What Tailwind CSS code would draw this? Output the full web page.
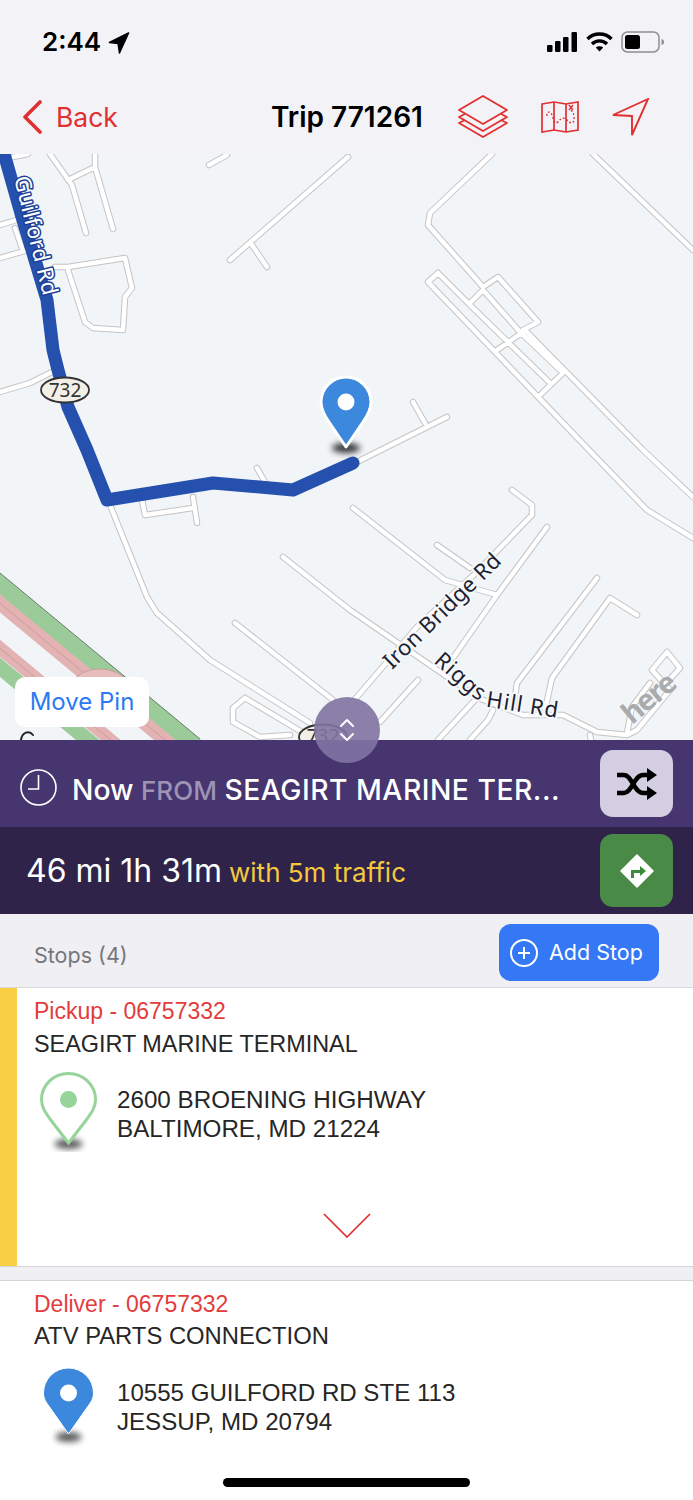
<!DOCTYPE html>
<html>
<head>
<meta charset="utf-8">
<script src="https://cdn.jsdelivr.net/npm/@tailwindcss/browser@4"></script>
</head>
<body class="m-0">
<div class="relative w-[693px] h-[1500px] overflow-hidden bg-[#f2f2f7] font-['Inter',sans-serif] flex flex-col">
  <!-- status bar -->
  <div class="h-[77px] shrink-0 flex items-start justify-between pl-[42px] pr-[28px] pt-[25px]">
    <div class="flex items-center gap-[7px] text-black">
      <span class="text-[26px] leading-[34px] font-semibold">2:44</span>
      <svg width="22" height="23" viewBox="0 0 22 24"><path d="M21 2 L1 12 L10 13 L11.500 23 Z" fill="#000" stroke="#000" stroke-width="1.500" stroke-linejoin="round"/></svg>
    </div>
    <div class="flex items-center gap-[8px] h-[34px]">
      <svg width="31" height="20" viewBox="0 0 31 20"><rect x="0" y="13" width="5.500" height="7" rx="1.200"/><rect x="8" y="9" width="5.500" height="11" rx="1.200"/><rect x="16" y="5" width="5.500" height="15" rx="1.200"/><rect x="24.500" y="0" width="5.500" height="20" rx="1.200"/></svg>
      <svg width="27" height="20" viewBox="0 0 27 20" fill="none" stroke="#000" stroke-width="3.400"><path d="M1.500 7 A17 17 0 0 1 25.500 7"/><path d="M6 12 A10.500 10.500 0 0 1 21 12"/><path d="M13.500 19.500 L9.800 15.600 A5.400 5.400 0 0 1 17.200 15.600 Z" fill="#000" stroke="none"/></svg>
      <svg width="44" height="22" viewBox="0 0 44 22" fill="none"><rect x="1" y="1" width="37" height="20" rx="5.500" stroke="#8e8e93" stroke-width="1.500"/><rect x="4" y="4" width="15" height="14" rx="2.500" fill="#000"/><path d="M40.500 8 C42.500 8.500 43 9.500 43 11 C43 12.500 42.500 13.500 40.500 14 Z" fill="#8e8e93"/></svg>
    </div>
  </div>
  <!-- nav bar -->
  <div class="h-[77px] shrink-0 relative flex items-center pl-[22px] pr-[43px] pt-[2px]">
    <div class="flex items-center gap-[14px] text-[#e13030]">
      <svg width="20" height="34" viewBox="0 0 20 34" fill="none" stroke="#e13030" stroke-width="3.600" stroke-linecap="round" stroke-linejoin="round"><path d="M18 2 L3 17 L18 32"/></svg>
      <span class="text-[26.500px] leading-[34px]">Back</span>
    </div>
    <div class="ml-[153px] text-[28px] leading-[34px] font-semibold text-black">Trip 771261</div>
    <div class="ml-auto flex items-center gap-[33px]">
      <svg width="50" height="44" viewBox="0 0 50 44" fill="none" stroke="#e13030" stroke-width="1.800" stroke-linejoin="round"><path d="M25 1 L49 15 L25 29 L1 15 Z"/><path d="M7 19 L1 22 L25 36 L49 22 L43 19"/><path d="M7 25 L1 28 L25 42 L49 28 L43 25"/></svg>
      <svg width="38" height="32" viewBox="0 0 38 32" fill="none" stroke="#e13030" stroke-width="1.700"><path d="M1 3 L13 1 L25 3 L37 1 L37 29 L25 31 L13 29 L1 31 Z"/><path d="M13 1 V29 M25 3 V31"/><path d="M6 15 C5 10 10 10 11 14 C13 20 13 23 17 21 C20 17 23 16 26 19 C30 24 34 22 33 16 C33 12 31 10 29 8" stroke-width="1.400" stroke-dasharray="1.800 2"/><path d="M28 4 L32 9 M32 4 L28 9" stroke-width="1.400"/></svg>
      <svg width="38" height="38" viewBox="0 0 38 38" fill="none" stroke="#e13030" stroke-width="1.900" stroke-linejoin="miter"><path d="M36 1 L1 17 L20 18 L20 37 Z"/></svg>
    </div>
  </div>
  <!-- map -->
  <div class="relative h-[586px] shrink-0 bg-[#f1f5f8] overflow-hidden">
    <svg class="block" width="693" height="586" viewBox="0 154 693 586" fill="none" stroke-linecap="round" stroke-linejoin="round" font-family="'Noto Sans',sans-serif">
      <!-- highway -->
      <g stroke-linecap="butt">
        <path d="M-10 576 L300 833" stroke="#9ccb9a" stroke-width="17"/>
        <path d="M-10 595 L300 852" stroke="#e3b3b3" stroke-width="14"/>
        <path d="M-10 595 L300 852" stroke="#cf9a9e" stroke-width="1"/>
        <path d="M-10 640 L300 897" stroke="#e3b3b3" stroke-width="13"/>
        <path d="M-10 640 L300 897" stroke="#cf9a9e" stroke-width="1"/>
        <path d="M-10 659 L300 916" stroke="#9ccb9a" stroke-width="15"/>
        <path d="M0 573 L200 739" stroke="#66776a" stroke-width="1"/>
      </g>
      <ellipse cx="100" cy="690" rx="30" ry="21" fill="#e6bcbc" stroke="#cf9a9e"/>
      <!-- road casing -->
      <g stroke="#c4c4c4" stroke-width="6.500">
        <path d="M50 154 L72 185 L86 233 M95 154 L95 167 L113 229 M68 180 L95 167 M13 157 L28 154 M0 225 L23 218 M15 228 L22 248 M0 258 L28 250 M55 267 L68 267 L125 258 L132 288 L125 297 L123 330 L93 328 L85 322 L68 270 M0 392 L30 383 L52 372 M348 157 L230 260 M252 245 L267 267 M227 155 L209 165 M492 154 L430 213 L428 225 L483 287 M483 287 L498 277 L538 322 L523 330 M470 303 L483 290 M438 273 L428 282 L589 450 L647 510 L693 538 M438 273 L470 305 L550 383 M483 290 L520 332 L560 370 M527 332 L643 450 L693 497 M497 350 L523 332 M538 397 L563 373 M593 154 L693 250 M355 463 L447 417 M413 402 L425 423 M512 490 L532 505 L532 515 L500 548 L477 572 L417 627 L350 705 M353 508 L445 580 L497 595 M437 545 L470 568 M547 527 L497 595 L453 658 M283 557 L350 610 L478 698 L523 715 L563 715 L597 732 L627 735 M597 578 L517 683 L513 710 M637 615 L610 598 L552 678 L545 710 M418 680 L380 722 M475 700 L438 740 M493 710 L488 720 L470 740 M667 652 L652 670 L670 690 L637 730 L627 735 M667 652 L680 668 L663 687 M650 683 L632 707 L627 733 M110 505 L147 597 L157 613 L210 660 L310 723 M142 500 L145 515 L193 508 M193 497 L197 523 M257 468 L265 482 M235 623 L333 700 M245 698 L233 708 L233 722 L260 737 L290 735 M245 698 L307 735 M590 735 L592 745"/>
      </g>
      <g stroke="#ffffff" stroke-width="4.500">
        <path d="M50 154 L72 185 L86 233 M95 154 L95 167 L113 229 M68 180 L95 167 M13 157 L28 154 M0 225 L23 218 M15 228 L22 248 M0 258 L28 250 M55 267 L68 267 L125 258 L132 288 L125 297 L123 330 L93 328 L85 322 L68 270 M0 392 L30 383 L52 372 M348 157 L230 260 M252 245 L267 267 M227 155 L209 165 M492 154 L430 213 L428 225 L483 287 M483 287 L498 277 L538 322 L523 330 M470 303 L483 290 M438 273 L428 282 L589 450 L647 510 L693 538 M438 273 L470 305 L550 383 M483 290 L520 332 L560 370 M527 332 L643 450 L693 497 M497 350 L523 332 M538 397 L563 373 M593 154 L693 250 M355 463 L447 417 M413 402 L425 423 M512 490 L532 505 L532 515 L500 548 L477 572 L417 627 L350 705 M353 508 L445 580 L497 595 M437 545 L470 568 M547 527 L497 595 L453 658 M283 557 L350 610 L478 698 L523 715 L563 715 L597 732 L627 735 M597 578 L517 683 L513 710 M637 615 L610 598 L552 678 L545 710 M418 680 L380 722 M475 700 L438 740 M493 710 L488 720 L470 740 M667 652 L652 670 L670 690 L637 730 L627 735 M667 652 L680 668 L663 687 M650 683 L632 707 L627 733 M110 505 L147 597 L157 613 L210 660 L310 723 M142 500 L145 515 L193 508 M193 497 L197 523 M257 468 L265 482 M235 623 L333 700 M245 698 L233 708 L233 722 L260 737 L290 735 M245 698 L307 735 M590 735 L592 745"/>
      </g>
      <!-- route -->
      <path d="M3 150 L22 217 L35 260 L47 300 L53 350 L58 370 L68 407 L87 450 L107 500 L213 483 L293 490 L353 463" stroke="#2550ad" stroke-width="13"/>
      <!-- labels -->
      <path id="lg" d="M14 178 L44 300"/>
      <path id="li" d="M392 670 L510 555"/>
      <path id="lr" d="M433 662 L470 695 L488 707 L565 719"/>
      <g font-size="22" fill="#1f1f33" stroke="#f6f8fa" stroke-width="4" paint-order="stroke">
        <text fill="#ffffff" stroke="#1d3f95" stroke-width="3" letter-spacing=".5"><textPath href="#lg">Guilford Rd</textPath></text>
        <text letter-spacing=".3"><textPath href="#li">Iron Bridge Rd</textPath></text>
        <text letter-spacing="1"><textPath href="#lr">Riggs Hill Rd</textPath></text>
      </g>
      <text transform="translate(632 725) rotate(-40)" font-size="29" font-weight="700" letter-spacing="-1.500" fill="#a9abad">here</text>
      <!-- shields -->
      <ellipse cx="65" cy="390" rx="24" ry="12.500" fill="#f1efe6" stroke="#333" stroke-width="1.800"/>
      <text x="65" y="397" text-anchor="middle" font-size="19" fill="#333">732</text>
      <ellipse cx="323" cy="737" rx="24" ry="12.500" fill="#f1efe6" stroke="#333" stroke-width="1.800"/>
      <text x="323" y="743" text-anchor="middle" font-size="19" fill="#333">732</text>
      <path d="M33 735 C29 730 22 732 21 740" stroke="#222" stroke-width="2"/>
      <!-- pin -->
      <ellipse cx="346" cy="448" rx="14" ry="5" fill="#000" opacity=".8" class="blur-[3px]"/>
      <path transform="translate(346 402)" d="M0 45 L-17 20 C-22 13 -25 7 -25 0 A25 25 0 1 1 25 0 C25 7 22 13 17 20 Z" fill="#3b88dc" stroke="#fff" stroke-width="3"/>
      <circle cx="346" cy="402" r="8.500" fill="#fff"/>
    </svg>
    <div class="absolute left-[15px] top-[523px] w-[134px] h-[50px] rounded-[10px] bg-white flex items-center justify-center text-[24px] text-[#2a7af3]">Move Pin</div>
  </div>
  <!-- handle -->
  <div class="absolute left-[314px] top-[697px] w-[66px] h-[66px] rounded-full bg-[#8173a2]/90 z-10 flex items-center justify-center">
    <svg width="16" height="24" viewBox="0 0 16 24" fill="none" stroke="#fff" stroke-width="2" stroke-linecap="round" stroke-linejoin="round"><path d="M2 8 L8 2 L14 8 M2 16 L8 22 L14 16"/></svg>
  </div>
  <!-- purple bar -->
  <div class="h-[87px] shrink-0 bg-[#47356f] flex items-center pl-[20px] pr-[20px]">
    <svg width="37" height="37" viewBox="0 0 37 37" fill="none" stroke="#fff" stroke-width="1.600" class="mt-[8px]"><circle cx="18.500" cy="18.500" r="17.500"/><path d="M18.500 6 V20 H8"/></svg>
    <div class="ml-[15px] mt-[14px] text-[28.300px] leading-[34px] font-medium whitespace-nowrap text-white"><span>Now</span> <span class="text-[26px] text-[#9d93b5]">FROM</span> <span class="tracking-[0.5px]">SEAGIRT MARINE TER...</span></div>
    <div class="ml-auto w-[73px] h-[67px] rounded-[13px] bg-[#d3cee2] flex items-center justify-center shrink-0">
      <svg width="40" height="32" viewBox="0 0 40 32" fill="none" stroke="#000" stroke-width="4.500"><path d="M0 7 H7 C15 7 17 25 26 25 H33 M0 25 H7 C15 25 17 7 26 7 H33"/><path d="M30 0 L40 7 L30 14 Z M30 18 L40 25 L30 32 Z" fill="#000" stroke="none"/></svg>
    </div>
  </div>
  <!-- dark bar -->
  <div class="h-[87px] shrink-0 bg-[#2f2349] flex items-center pl-[26px] pr-[20px]">
    <div class="mt-[2px] text-[32px] leading-[38px] text-white whitespace-nowrap">46 mi 1h 31m <span class="text-[26px] ml-[-2px] text-[#f4c83f]">with 5m traffic</span></div>
    <div class="ml-auto w-[73px] h-[73px] rounded-[13px] bg-[#4a8a47] flex items-center justify-center shrink-0">
      <svg width="34" height="34" viewBox="0 0 34 34"><path d="M17 1 L33 17 L17 33 L1 17 Z" fill="#fff" stroke="#fff" stroke-width="1.500" stroke-linejoin="round"/><path d="M11 24 V16 H20 V12 L26 17 L20 22 V19 H14 V24 Z" fill="#3c8c3c"/></svg>
    </div>
  </div>
  <!-- stops header -->
  <div class="h-[74px] shrink-0 bg-[#efeff4] flex items-start pl-[34px] pr-[34px] pt-[10px] border-b border-[#d9d9dd]">
    <span class="mt-[17px] text-[21.500px] leading-[28px] text-[#76767a]">Stops (4)</span>
    <div class="ml-auto w-[160px] h-[57px] rounded-[12px] bg-[#3478f6] flex items-center pl-[11px] gap-[11px] text-white">
      <svg width="28" height="28" viewBox="0 0 28 28" fill="none" stroke="#fff" stroke-width="2"><circle cx="14" cy="14" r="13"/><path d="M14 8 V20 M8 14 H20"/></svg>
      <span class="text-[21.500px]">Add Stop</span>
    </div>
  </div>
  <!-- stop 1 -->
  <div class="h-[279px] shrink-0 bg-white flex border-b border-[#d5d5d9] font-['Liberation_Sans',sans-serif]">
    <div class="w-[17px] bg-[#f8cf45]"></div>
    <div class="flex-1 pl-[17px] pt-[9px] flex flex-col">
      <div class="text-[23px] leading-[29px] text-[#e23c3c]">Pickup - 06757332</div>
      <div class="text-[23.400px] leading-[33px] text-[#262626] mt-[2px]">SEAGIRT MARINE TERMINAL</div>
      <div class="flex mt-[11px] ml-[6px]">
        <svg width="57" height="80" viewBox="0 0 57 80" class="shrink-0" fill="none">
          <ellipse cx="28.500" cy="72" rx="14" ry="5" fill="#000" opacity=".65" class="blur-[3px]"/>
          <path d="M28.500 71 L10 47 C5 40 1.500 35 1.500 27.500 A27 26 0 0 1 55.500 27.500 C55.500 35 52 40 47 47 Z" fill="#fff" stroke="#96d49a" stroke-width="3"/>
          <circle cx="28.500" cy="27.500" r="8.500" fill="#96d49a"/>
        </svg>
        <div class="ml-[20px] mt-[13px] text-[24.200px] leading-[29px] text-[#262626] whitespace-nowrap">2600 BROENING HIGHWAY<br>BALTIMORE, MD 21224</div>
      </div>
      <div class="mt-[61px] ml-[289px]">
        <svg width="48" height="25" viewBox="0 0 48 25" fill="none" stroke="#e13030" stroke-width="1.700"><path d="M1 1 L24 24 L47 1"/></svg>
      </div>
    </div>
  </div>
  <div class="h-[14px] shrink-0 bg-[#efeff4] border-b border-[#d5d5d9]"></div>
  <!-- stop 2 -->
  <div class="flex-1 bg-white pl-[34px] pt-[9px] flex flex-col font-['Liberation_Sans',sans-serif]">
    <div class="text-[23px] leading-[29px] text-[#e23c3c]">Deliver - 06757332</div>
    <div class="text-[23.800px] leading-[33px] text-[#262626]">ATV PARTS CONNECTION</div>
    <div class="flex mt-[16px] ml-[9px]">
      <svg width="51" height="80" viewBox="0 0 51 80" class="shrink-0">
        <ellipse cx="25.500" cy="69" rx="13" ry="5" fill="#000" opacity=".65" class="blur-[3px]"/>
        <path d="M25.500 66 L8 41 C3 34 .5 31 .5 25 A25 25 0 0 1 50.500 25 C50.500 31 48 34 43 41 Z" fill="#3b88dc" stroke="#fff" stroke-width="1"/>
        <circle cx="25.500" cy="25" r="8.500" fill="#fff"/>
      </svg>
      <div class="ml-[23px] mt-[10px] text-[24.100px] leading-[29px] text-[#262626] whitespace-nowrap">10555 GUILFORD RD STE 113<br>JESSUP, MD 20794</div>
    </div>
  </div>
  <!-- home indicator -->
  <div class="absolute left-[223px] top-[1478px] w-[247px] h-[9px] rounded-full bg-black"></div>
</div>
</body>
</html>
